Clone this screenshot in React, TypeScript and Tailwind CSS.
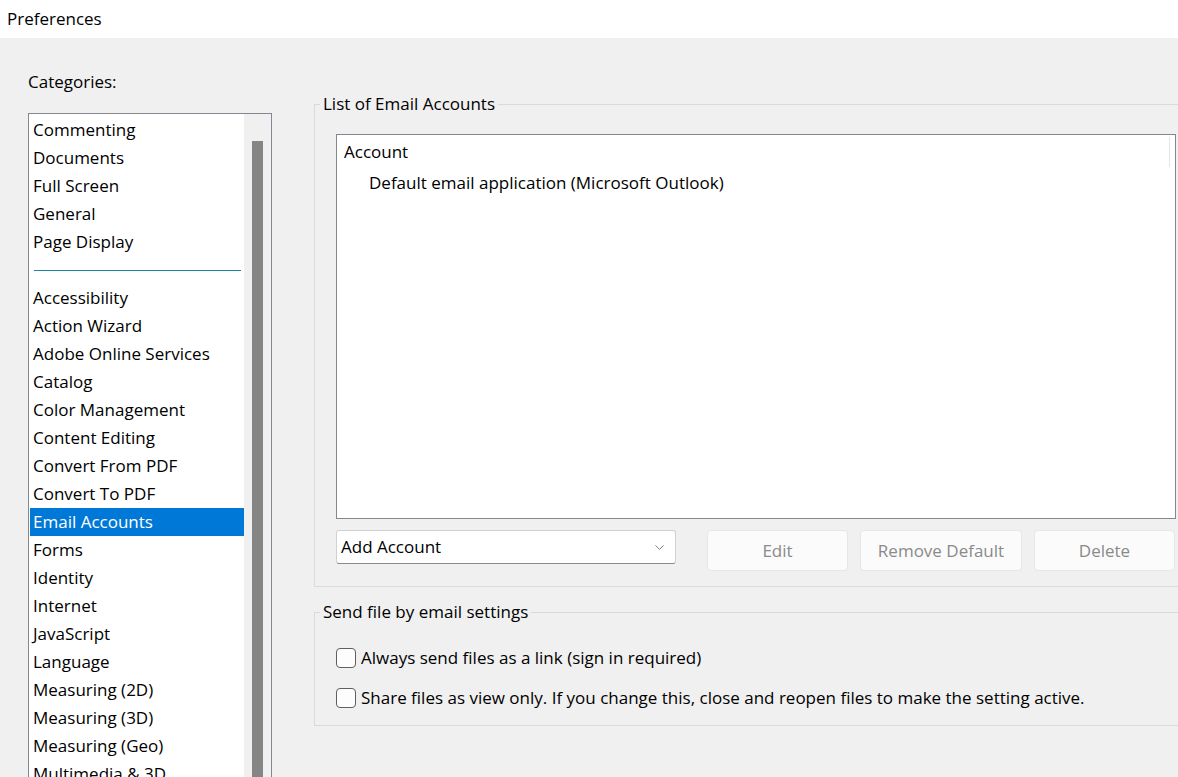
import { ChevronDown } from "lucide-react";

const topCats = ["Commenting", "Documents", "Full Screen", "General", "Page Display"];
const cats = [
  "Accessibility",
  "Action Wizard",
  "Adobe Online Services",
  "Catalog",
  "Color Management",
  "Content Editing",
  "Convert From PDF",
  "Convert To PDF",
  "Email Accounts",
  "Forms",
  "Identity",
  "Internet",
  "JavaScript",
  "Language",
  "Measuring (2D)",
  "Measuring (3D)",
  "Measuring (Geo)",
  "Multimedia & 3D",
];

function CatRow({ label, selected }: { label: string; selected?: boolean }) {
  return (
    <div
      className={`h-[28px] flex items-center pl-[3px] ${
        selected ? "bg-[#0078d7] text-white" : "text-black"
      }`}
    >
      {label}
    </div>
  );
}

function Check({ label }: { label: string }) {
  return (
    <label className="flex items-center gap-[5px] h-[20px]">
      <span className="w-[20px] h-[20px] rounded-[4px] border border-[#5f5f5f] bg-[#fdfdfd] shrink-0" />
      <span>{label}</span>
    </label>
  );
}

function GrayButton({ label, width }: { label: string; width: string }) {
  return (
    <button
      type="button"
      className={`${width} h-[41px] rounded-[4px] border border-[#e6e6e6] bg-[#fbfbfb] text-[#8a8a8a]`}
    >
      {label}
    </button>
  );
}

export default function App() {
  return (
    <div
      className="w-[1178px] h-[777px] overflow-hidden bg-[#f0f0f0] text-[17px] text-black flex flex-col"
      style={{ fontFamily: '"Open Sans", "Noto Sans", sans-serif' }}
    >
      <div className="h-[38px] bg-white flex items-center pl-[7px] shrink-0">Preferences</div>

      <div className="flex flex-1 min-h-0">
        {/* categories column */}
        <div className="w-[286px] pl-[28px] shrink-0 flex flex-col">
          <div className="h-[75px] shrink-0 flex items-end pb-[19px]">Categories:</div>
          <div className="w-[244px] flex-1 min-h-0 overflow-hidden border border-[#828790] border-b-0 bg-white flex">
            <div className="w-[215px] pt-[2px] pl-[1px] shrink-0">
              {topCats.map((c) => (
                <CatRow key={c} label={c} />
              ))}
              <div className="h-[28px] flex items-center pl-[4px] pr-[3px]">
                <div className="w-full h-px bg-[#1a83a6]" />
              </div>
              {cats.map((c) => (
                <CatRow key={c} label={c} selected={c === "Email Accounts"} />
              ))}
            </div>
            <div className="flex-1 bg-[#f0f0f0] flex justify-center pt-[27px]">
              <div className="w-[11px] h-full bg-[#858585]" />
            </div>
          </div>
        </div>

        {/* settings column */}
        <div className="flex-1 pl-[28px] pt-[54px]">
          <fieldset className="h-[495px] -mr-[20px] border border-[#dadada] pl-[21px] pr-[22px]">
            <legend className="px-[3px] -ml-[16px] leading-[24px]">List of Email Accounts</legend>
            <div className="mt-[18px] w-[840px] h-[385px] border border-[#828790] bg-white relative">
              <div className="pl-[7px] pt-[5px] h-[30px] leading-[24px]">Account</div>
              <div className="pl-[32px] pt-[3px] leading-[30px]">Default email application (Microsoft Outlook)</div>
              <div className="absolute left-[832px] top-[2px] w-px h-[30px] bg-[#e4e4e4]" />
            </div>
            <div className="mt-[11px] flex items-start">
              <div className="w-[340px] h-[34px] bg-white border border-[#d0d0d0] border-b-[#8a8a8a] rounded-[3px] flex items-center justify-between pl-[4px] pr-[8px]">
                <span>Add Account</span>
                <ChevronDown className="w-[15px] h-[15px] text-[#5a5a5a]" strokeWidth={1.3} />
              </div>
              <div className="ml-[31px] flex gap-[12px]">
                <GrayButton label="Edit" width="w-[141px]" />
                <GrayButton label="Remove Default" width="w-[162px]" />
                <GrayButton label="Delete" width="w-[141px]" />
              </div>
            </div>
          </fieldset>

          <fieldset className="mt-[13px] h-[126px] -mr-[20px] border border-[#dadada] pl-[21px]">
            <legend className="px-[3px] -ml-[16px] leading-[24px]">Send file by email settings</legend>
            <div className="mt-[24px] flex flex-col gap-[20px]">
              <Check label="Always send files as a link (sign in required)" />
              <Check label="Share files as view only. If you change this, close and reopen files to make the setting active." />
            </div>
          </fieldset>
        </div>
      </div>
    </div>
  );
}
